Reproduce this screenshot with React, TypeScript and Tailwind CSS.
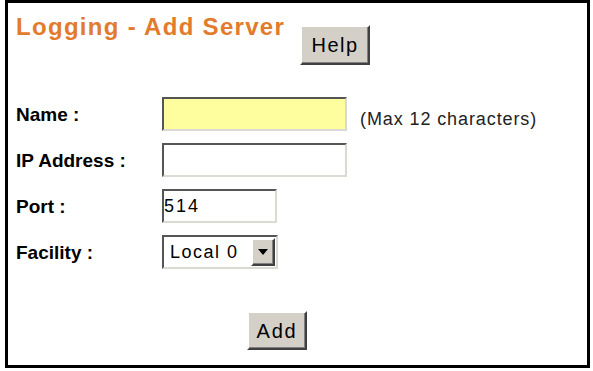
const inset =
  'border-2 border-t-[#555] border-l-[#555] border-b-[#dcd9d2] border-r-[#dcd9d2]';
const outset =
  'border-2 border-t-white border-l-white border-b-[#404040] border-r-[#404040] bg-[#d4d0c8] shadow-[inset_-1px_-1px_0_#808080]';

function Row({ label, children }: { label: string; children: React.ReactNode }) {
  return (
    <div className="flex items-center h-[34px]">
      <div className="w-[146px] text-[19px] font-bold text-black leading-none">{label}</div>
      {children}
    </div>
  );
}

export default function App() {
  return (
    <div className="w-[593px] h-[371px] bg-white font-['Liberation_Sans',Arial,sans-serif]">
      <div className="ml-[5px] w-[585px] h-[368px] border-[3px] border-black pt-[12px] pl-[8px]">
        <div className="flex items-start">
          <h1 className="text-[24px] leading-[24px] font-bold tracking-[1.3px] text-[#e27b2c]">
            Logging - Add Server
          </h1>
          <button
            className={`ml-[15px] mt-[10px] w-[70px] h-[40px] ${outset} text-[20px] tracking-[1.5px] text-black leading-none`}
          >
            Help
          </button>
        </div>

        <div className="mt-[32px] flex flex-col gap-[12px]">
          <Row label="Name :">
            <input
              type="text"
              className={`w-[185px] h-[34px] ${inset} bg-[#fefe9f] outline-none`}
            />
            <span className="ml-[13px] mt-[9px] text-[18px] tracking-[0.9px] text-[#222] leading-none">
              (Max 12 characters)
            </span>
          </Row>
          <Row label="IP Address :">
            <input type="text" className={`w-[185px] h-[34px] ${inset} bg-white outline-none`} />
          </Row>
          <Row label="Port :">
            <input
              type="text"
              defaultValue="514"
              className={`w-[115px] h-[34px] ${inset} bg-white outline-none pl-0 text-[18px] tracking-[2px] text-black`}
            />
          </Row>
          <Row label="Facility :">
            <div className={`w-[116px] h-[34px] ${inset} bg-white flex items-center`}>
              <span className="ml-[6px] flex-1 text-[18px] tracking-[1.5px] text-black leading-none">
                Local 0
              </span>
              <div className={`w-[24px] h-[28px] mr-[1px] ${outset} flex items-center justify-center`}>
                <svg width="10" height="6" viewBox="0 0 10 6">
                  <path d="M0 0 H10 L5 6 Z" fill="#000" />
                </svg>
              </div>
            </div>
          </Row>
        </div>

        <button
          className={`mt-[42px] ml-[231px] w-[60px] h-[39px] ${outset} text-[20px] tracking-[1.8px] text-black leading-none`}
        >
          Add
        </button>
      </div>
    </div>
  );
}
